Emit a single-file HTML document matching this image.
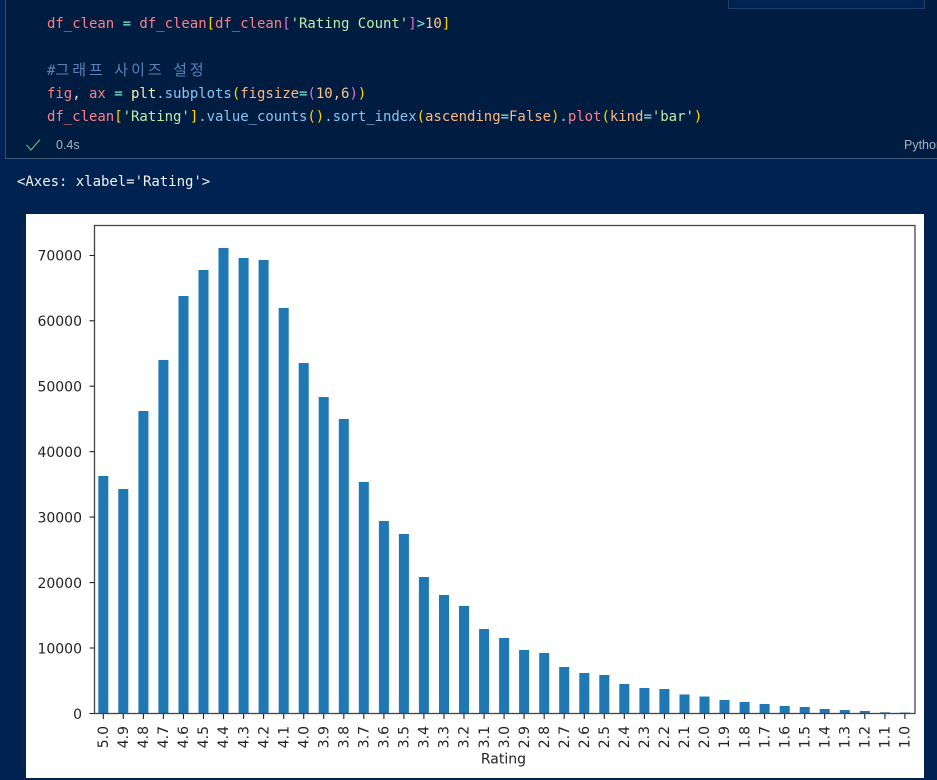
<!DOCTYPE html>
<html><head><meta charset="utf-8">
<style>
html,body{margin:0;padding:0;width:937px;height:780px;overflow:hidden;background:#002251}
.ed{position:absolute;left:5px;top:0;width:932px;height:158px;background:#001c40;border-left:1px solid #34506f;border-bottom:1px solid #41597a;box-sizing:content-box}
.panel{position:absolute;left:728px;top:-2px;width:195px;height:9px;background:#002251;border:1px solid #1f3d68}
.l{position:absolute;left:47px;height:23px;font:14px/23px "DejaVu Sans Mono","Noto Sans CJK KR",monospace;letter-spacing:-.03px;white-space:pre;color:#ff7f86}
.y{color:#ffd700}.m{color:#e46fd0}.s{color:#b9eeaa}.c{color:#7ee8e0}.n{color:#ffc88a}.b{color:#86c5f2}.p{color:#f3f1ae}.o{color:#ffb680}.g{color:#5c82b8}.v{color:#b58cf0}
.k{font:15px/23px "Noto Sans CJK KR","WenQuanYi Zen Hei",sans-serif;letter-spacing:3px;word-spacing:2.1px}
.t{position:absolute;font:12.5px "Liberation Sans",sans-serif;color:#aab4c2}
.out{position:absolute;left:17px;top:171px;font:14px/23px "DejaVu Sans Mono","Noto Sans CJK KR",monospace;letter-spacing:-.03px;color:#f0f2f5;white-space:pre}
.fig{position:absolute;left:26px;top:214px;width:898px;height:564px;background:#fff}
svg{position:absolute;left:0;top:0}
svg text{font-family:"DejaVu Sans",sans-serif;font-size:14px;fill:#222}
</style></head><body>
<div class="ed"></div>
<div class="panel"></div>
<div class="l" style="top:13px">df_clean <span class="c">=</span> df_clean<span class="y">[</span>df_clean<span class="m">[</span><span class="s">'Rating Count'</span><span class="m">]</span><span class="c">&gt;</span><span class="n">10</span><span class="y">]</span></div>
<div class="l" style="top:58px;color:#5c82b8">#<span class="k">그래프 사이즈 설정</span></div>
<div class="l" style="top:83px">fig<span style="color:#e8e8e8">,</span> ax <span class="c">=</span> <span class="p">plt</span><span class="b">.subplots</span><span class="y">(</span><span class="o">figsize</span><span class="c">=</span><span class="m">(</span><span class="n">10,6</span><span class="m">)</span><span class="y">)</span></div>
<div class="l" style="top:106px">df_clean<span class="y">[</span><span class="s">'Rating'</span><span class="y">]</span><span class="b">.value_counts</span><span class="y">()</span><span class="b">.sort_index</span><span class="y">(</span><span class="o">ascending</span><span class="c">=</span><span class="o">False</span><span class="y">)</span><span class="b">.</span>plot<span class="y">(</span><span class="o">kind</span><span class="c">=</span><span class="s">'bar'</span><span class="y">)</span></div>
<svg style="left:0;top:0" width="60" height="158"><path d="M26.500 145l4.500 5 9-10.500" fill="none" stroke="#5dbb77" stroke-width="1.200"/></svg>
<div class="t" style="left:56px;top:138px">0.4s</div>
<div class="t" style="left:904px;top:138px">Python</div>
<div class="out">&lt;Axes: xlabel='Rating'&gt;</div>
<div class="fig"></div>
<svg width="937" height="780" viewBox="0 0 937 780" style="filter:blur(.35px)">
<g fill="#1f77b4">
<rect x="98.300" y="476" width="10" height="237.600"/>
<rect x="118.300" y="489" width="10" height="224.600"/>
<rect x="138.400" y="411" width="10" height="302.600"/>
<rect x="158.400" y="360" width="10" height="353.600"/>
<rect x="178.500" y="296" width="10" height="417.600"/>
<rect x="198.500" y="270" width="10" height="443.600"/>
<rect x="218.500" y="248" width="10" height="465.600"/>
<rect x="238.600" y="258" width="10" height="455.600"/>
<rect x="258.600" y="260" width="10" height="453.600"/>
<rect x="278.700" y="308" width="10" height="405.600"/>
<rect x="298.700" y="363" width="10" height="350.600"/>
<rect x="318.700" y="397" width="10" height="316.600"/>
<rect x="338.800" y="419" width="10" height="294.600"/>
<rect x="358.800" y="482" width="10" height="231.600"/>
<rect x="378.900" y="521" width="10" height="192.600"/>
<rect x="398.900" y="534" width="10" height="179.600"/>
<rect x="418.900" y="577" width="10" height="136.600"/>
<rect x="439" y="595" width="10" height="118.600"/>
<rect x="459" y="606" width="10" height="107.600"/>
<rect x="479.100" y="629" width="10" height="84.600"/>
<rect x="499.100" y="638" width="10" height="75.600"/>
<rect x="519.100" y="650" width="10" height="63.600"/>
<rect x="539.200" y="653" width="10" height="60.600"/>
<rect x="559.200" y="667" width="10" height="46.600"/>
<rect x="579.300" y="673" width="10" height="40.600"/>
<rect x="599.300" y="675" width="10" height="38.600"/>
<rect x="619.300" y="684" width="10" height="29.600"/>
<rect x="639.400" y="688" width="10" height="25.600"/>
<rect x="659.400" y="689" width="10" height="24.600"/>
<rect x="679.500" y="694.500" width="10" height="19.100"/>
<rect x="699.500" y="696.500" width="10" height="17.100"/>
<rect x="719.500" y="700" width="10" height="13.600"/>
<rect x="739.600" y="702" width="10" height="11.600"/>
<rect x="759.600" y="704" width="10" height="9.600"/>
<rect x="779.700" y="706" width="10" height="7.600"/>
<rect x="799.700" y="707" width="10" height="6.600"/>
<rect x="819.700" y="709" width="10" height="4.600"/>
<rect x="839.800" y="710" width="10" height="3.600"/>
<rect x="859.800" y="711" width="10" height="2.600"/>
<rect x="879.900" y="712.300" width="10" height="1.300"/>
<rect x="899.900" y="712.500" width="10" height="1.100"/>
</g>
<rect x="94.500" y="225.500" width="820.500" height="488" fill="none" stroke="#444" stroke-width="1.300"/>
<path stroke="#222" stroke-width="1.100" d="M89.500 713.500h5M89.500 648h5M89.500 582.600h5M89.500 517.100h5M89.500 451.700h5M89.500 386.200h5M89.500 320.800h5M89.500 255.500h5"/>
<g text-anchor="end">
<text x="82" y="719">0</text>
<text x="82" y="653.500">10000</text>
<text x="82" y="588">20000</text>
<text x="82" y="522.500">30000</text>
<text x="82" y="457">40000</text>
<text x="82" y="391.500">50000</text>
<text x="82" y="326">60000</text>
<text x="82" y="260.500">70000</text>
</g>
<path stroke="#222" stroke-width="1.100" d="M103.300 714v5M123.300 714v5M143.400 714v5M163.400 714v5M183.500 714v5M203.500 714v5M223.500 714v5M243.600 714v5M263.600 714v5M283.700 714v5M303.700 714v5M323.700 714v5M343.800 714v5M363.800 714v5M383.900 714v5M403.900 714v5M423.900 714v5M444 714v5M464 714v5M484.100 714v5M504.100 714v5M524.100 714v5M544.200 714v5M564.200 714v5M584.300 714v5M604.300 714v5M624.300 714v5M644.400 714v5M664.400 714v5M684.500 714v5M704.500 714v5M724.500 714v5M744.600 714v5M764.600 714v5M784.700 714v5M804.700 714v5M824.700 714v5M844.800 714v5M864.800 714v5M884.900 714v5M904.900 714v5"/>
<g text-anchor="end">
<text transform="translate(108 726) rotate(-90)">5.0</text>
<text transform="translate(128 726) rotate(-90)">4.9</text>
<text transform="translate(148.100 726) rotate(-90)">4.8</text>
<text transform="translate(168.100 726) rotate(-90)">4.7</text>
<text transform="translate(188.200 726) rotate(-90)">4.6</text>
<text transform="translate(208.200 726) rotate(-90)">4.5</text>
<text transform="translate(228.200 726) rotate(-90)">4.4</text>
<text transform="translate(248.300 726) rotate(-90)">4.3</text>
<text transform="translate(268.300 726) rotate(-90)">4.2</text>
<text transform="translate(288.400 726) rotate(-90)">4.1</text>
<text transform="translate(308.400 726) rotate(-90)">4.0</text>
<text transform="translate(328.400 726) rotate(-90)">3.9</text>
<text transform="translate(348.500 726) rotate(-90)">3.8</text>
<text transform="translate(368.500 726) rotate(-90)">3.7</text>
<text transform="translate(388.600 726) rotate(-90)">3.6</text>
<text transform="translate(408.600 726) rotate(-90)">3.5</text>
<text transform="translate(428.600 726) rotate(-90)">3.4</text>
<text transform="translate(448.700 726) rotate(-90)">3.3</text>
<text transform="translate(468.700 726) rotate(-90)">3.2</text>
<text transform="translate(488.800 726) rotate(-90)">3.1</text>
<text transform="translate(508.800 726) rotate(-90)">3.0</text>
<text transform="translate(528.800 726) rotate(-90)">2.9</text>
<text transform="translate(548.900 726) rotate(-90)">2.8</text>
<text transform="translate(568.900 726) rotate(-90)">2.7</text>
<text transform="translate(589 726) rotate(-90)">2.6</text>
<text transform="translate(609 726) rotate(-90)">2.5</text>
<text transform="translate(629 726) rotate(-90)">2.4</text>
<text transform="translate(649.100 726) rotate(-90)">2.3</text>
<text transform="translate(669.100 726) rotate(-90)">2.2</text>
<text transform="translate(689.200 726) rotate(-90)">2.1</text>
<text transform="translate(709.200 726) rotate(-90)">2.0</text>
<text transform="translate(729.200 726) rotate(-90)">1.9</text>
<text transform="translate(749.300 726) rotate(-90)">1.8</text>
<text transform="translate(769.300 726) rotate(-90)">1.7</text>
<text transform="translate(789.400 726) rotate(-90)">1.6</text>
<text transform="translate(809.400 726) rotate(-90)">1.5</text>
<text transform="translate(829.400 726) rotate(-90)">1.4</text>
<text transform="translate(849.500 726) rotate(-90)">1.3</text>
<text transform="translate(869.500 726) rotate(-90)">1.2</text>
<text transform="translate(889.600 726) rotate(-90)">1.1</text>
<text transform="translate(909.600 726) rotate(-90)">1.0</text>
</g>
<text x="503.400" y="763.500" text-anchor="middle">Rating</text>
</svg>
</body></html>
